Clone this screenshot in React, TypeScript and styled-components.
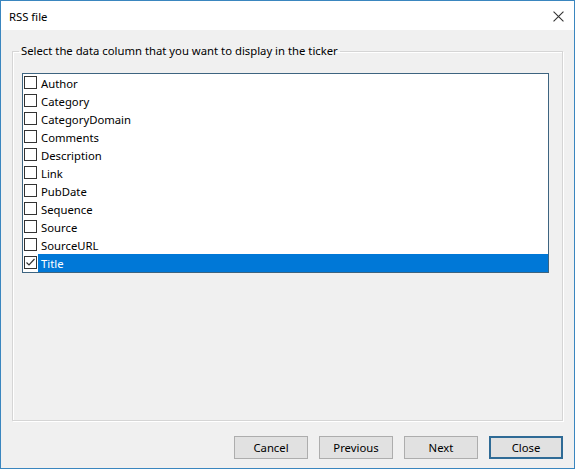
import styled, {createGlobalStyle} from 'styled-components'

const GlobalStyle = createGlobalStyle`
  html, body {
    margin: 0;
    padding: 0;
    background: #ffffff;
  }
  body {
    font-family: 'Noto Sans', 'Liberation Sans', sans-serif;
    font-size: 11.3px;
    color: #000000;
  }
`

const columns = [
  'Author',
  'Category',
  'CategoryDomain',
  'Comments',
  'Description',
  'Link',
  'PubDate',
  'Sequence',
  'Source',
  'SourceURL',
  'Title',
]

const checked = ['Title']

export default function App() {
  return (
    <>
      <GlobalStyle />
      <Window>
        <TitleBar>
          <Caption>RSS file</Caption>
          <CloseGlyph viewBox="0 0 10 10" aria-label="Close">
            <path d="M0.5 0.5 L9.5 9.5 M9.5 0.5 L0.5 9.5" />
          </CloseGlyph>
        </TitleBar>
        <Body>
          <Group>
            <Legend>Select the data column that you want to display in the ticker</Legend>
            <ListBox>
              {columns.map(name => {
                const isChecked = checked.includes(name)
                return (
                  <Row key={name}>
                    <CheckBox>
                      {isChecked && (
                        <svg viewBox="0 0 11 11" width="11" height="11">
                          <path d="M1.5 5.5 L4 8 L9.5 2" fill="none" stroke="#333333" strokeWidth="1.2" />
                        </svg>
                      )}
                    </CheckBox>
                    <Label $selected={isChecked}>{name}</Label>
                  </Row>
                )
              })}
            </ListBox>
          </Group>
          <ButtonRow>
            <Button>Cancel</Button>
            <Button>Previous</Button>
            <Button>Next</Button>
            <Button $default>Close</Button>
          </ButtonRow>
        </Body>
      </Window>
    </>
  )
}

const Window = styled.div`
  width: 575px;
  height: 469px;
  box-sizing: border-box;
  border: 1px solid #3a86bf;
  display: flex;
  flex-direction: column;
  background: #f0f0f0;
`

const TitleBar = styled.div`
  height: 29px;
  flex-shrink: 0;
  background: #ffffff;
  display: flex;
  align-items: center;
  justify-content: space-between;
  padding: 0 10px 0 8px;
`

const Caption = styled.span`
  font-size: 11.3px;
  color: #000000;
  margin-top: 1px;
`

const CloseGlyph = styled.svg`
  width: 11px;
  height: 11px;
  stroke: #333333;
  stroke-width: 1;
  fill: none;
  margin-top: 1px;
`

const Body = styled.div`
  flex: 1;
  display: flex;
  flex-direction: column;
  padding: 13px 11px 10px 11px;
`

const Group = styled.fieldset`
  margin: 0;
  height: 378px;
  box-sizing: border-box;
  padding: 14px 13px 20px 9px;
  border: 1px solid #d5d5d5;
  box-shadow: inset 1px 1px 0 #ffffff, 1px 1px 0 #ffffff;
  display: flex;
  flex-direction: column;
`

const Legend = styled.legend`
  padding: 0 2px;
  margin-left: -3px;
  line-height: 16px;
  color: #000000;
`

const ListBox = styled.div`
  flex: 1;
  background: #ffffff;
  border: 1px solid #3d6480;
  display: flex;
  flex-direction: column;
`

const Row = styled.div`
  height: 18px;
  display: flex;
  align-items: center;
  padding-left: 1px;
`

const CheckBox = styled.span`
  width: 13px;
  height: 13px;
  box-sizing: border-box;
  border: 1px solid #333333;
  background: #ffffff;
  display: flex;
  align-items: center;
  justify-content: center;
  margin-bottom: 1px;
  flex-shrink: 0;
`

const Label = styled.span<{$selected?: boolean}>`
  flex: 1;
  align-self: stretch;
  display: flex;
  align-items: center;
  padding-left: 3px;
  margin-left: 1px;
  background: ${props => (props.$selected ? '#0078d7' : 'transparent')};
  color: ${props => (props.$selected ? '#ffffff' : '#000000')};
`

const ButtonRow = styled.div`
  display: flex;
  justify-content: flex-end;
  gap: 11px;
  margin-top: 15px;
`

const Button = styled.button<{$default?: boolean}>`
  width: 74px;
  height: 23px;
  box-sizing: border-box;
  font-family: inherit;
  font-size: 11.3px;
  color: #000000;
  background: #e1e1e1;
  border: ${props => (props.$default ? '2px solid #2f6b96' : '1px solid #adadad')};
  padding: 0;
`
